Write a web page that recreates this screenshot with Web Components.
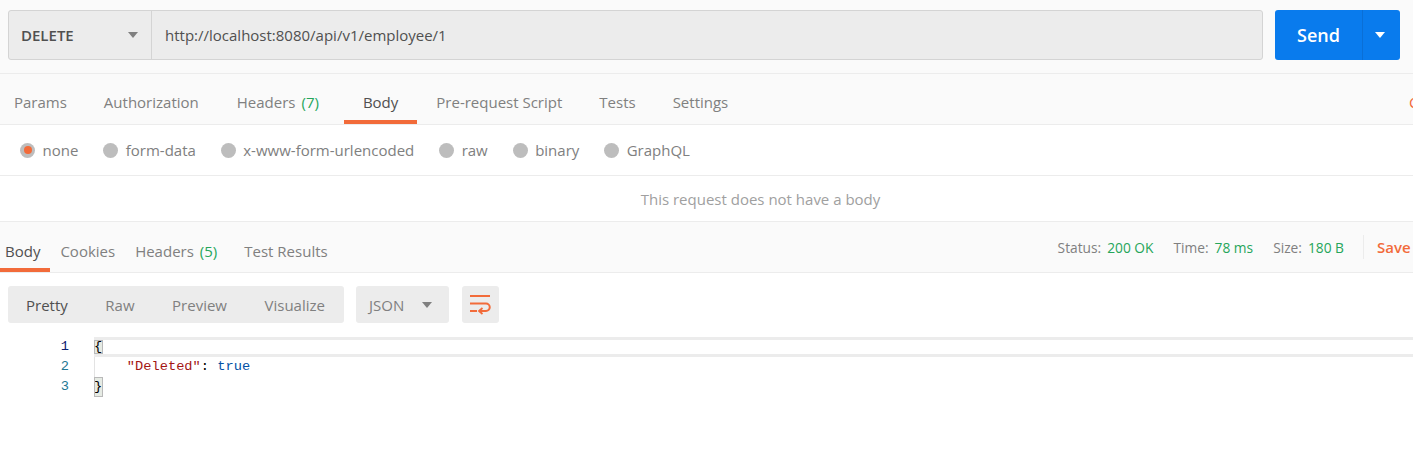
<!DOCTYPE html>
<html>
<head>
<meta charset="utf-8">
<title>Postman</title>
<style>
    html, body { margin: 0; padding: 0; background: #fff; overflow: hidden; }
    body { width: 1413px; height: 451px; font-family: "Open Sans", sans-serif; }
</style>
</head>
<body>
<pm-request-bar method="DELETE" url="http://localhost:8080/api/v1/employee/1"></pm-request-bar>
<pm-tabs style="--pad:-5px">
    <pm-tab style="margin-right:-1px">Params</pm-tab>
    <pm-tab>Authorization</pm-tab>
    <pm-tab style="margin-right:6px">Headers<b slot="count">(7)</b></pm-tab>
    <pm-tab active>Body</pm-tab>
    <pm-tab style="margin-right:-1px">Pre-request Script</pm-tab>
    <pm-tab style="margin-right:-1px">Tests</pm-tab>
    <pm-tab>Settings</pm-tab>
    <pm-clipped slot="right">Cookies</pm-clipped>
</pm-tabs>
<pm-body-types>
    <pm-radio checked>none</pm-radio>
    <pm-radio>form-data</pm-radio>
    <pm-radio>x-www-form-urlencoded</pm-radio>
    <pm-radio>raw</pm-radio>
    <pm-radio>binary</pm-radio>
    <pm-radio>GraphQL</pm-radio>
</pm-body-types>
<pm-empty-note>This request does not have a body</pm-empty-note>
<pm-response-head></pm-response-head>
<pm-response-toolbar></pm-response-toolbar>
<pm-code-view></pm-code-view>

<script>
const caret = (color, w = 10, h = 6) => `<svg width="${w}" height="${h}" viewBox="0 0 10 6"><path d="M0 0h10L5 6z" fill="${color}"/></svg>`

class PmRequestBar extends HTMLElement {
    constructor() {
        super()
        const shadow = this.attachShadow({ mode: 'open' })
        shadow.innerHTML = `
            <style>
                :host { display: flex; box-sizing: border-box; height: 74px; padding: 10px 13px 0 8px; background: #fafafa; border-bottom: 1px solid #ececec; font-family: "Open Sans", sans-serif; }
                .field { display: flex; flex: 1; height: 50px; box-sizing: border-box; background: #ececec; border: 1px solid #d4d4d4; border-radius: 3px; font-size: 15px; color: #505050; }
                .method { display: flex; align-items: center; justify-content: space-between; box-sizing: border-box; width: 143px; padding: 0 13px 0 12px; border-right: 1px solid #d4d4d4; font-weight: 600; font-size: 15px; }
                .url { display: flex; align-items: center; padding-left: 13px; }
                .send { display: flex; width: 125px; height: 50px; margin-left: 12px; background: #097bed; border-radius: 3px; color: #fff; font-size: 18px; font-weight: 600; }
                .send span { display: flex; align-items: center; justify-content: center; width: 87px; border-right: 1px solid #0a6fd6; }
                .send i { display: flex; align-items: center; justify-content: center; flex: 1; padding-right: 3px; }
            </style>
            <div class="field">
                <div class="method">${this.getAttribute('method')}${caret('#808080')}</div>
                <div class="url">${this.getAttribute('url')}</div>
            </div>
            <div class="send"><span>Send</span><i>${caret('#fff')}</i></div>
        `
    }
}

class PmTabs extends HTMLElement {
    constructor() {
        super()
        const shadow = this.attachShadow({ mode: 'open' })
        shadow.innerHTML = `
            <style>
                :host { display: flex; box-sizing: border-box; height: 51px; background: #fafafa; border-bottom: 1px solid #ececec; }
                .list { display: flex; margin-left: var(--pad); }
                .right { display: flex; margin-left: auto; }
            </style>
            <div class="list"><slot></slot></div>
            <div class="right"><slot name="right"></slot></div>
        `
    }
}

class PmTab extends HTMLElement {
    constructor() {
        super()
        const shadow = this.attachShadow({ mode: 'open' })
        shadow.innerHTML = `
            <style>
                :host { display: flex; align-items: center; box-sizing: border-box; height: 50px; padding: var(--tab-top, 9px) var(--tab-pad, 19px) 0; border-bottom: 4px solid transparent; font-family: "Open Sans", sans-serif; font-size: 15px; color: #808080; }
                :host([active]) { color: #505050; border-bottom-color: #f26b3a; }
                ::slotted(b) { font-weight: 400; color: #26a65b; margin-left: 6px; }
            </style>
            <slot></slot><slot name="count"></slot>
        `
    }
}

class PmClipped extends HTMLElement {
    constructor() {
        super()
        const shadow = this.attachShadow({ mode: 'open' })
        shadow.innerHTML = `
            <style>
                :host { display: flex; align-items: center; width: 4px; height: 50px; overflow: hidden; padding-top: 5px; box-sizing: border-box; font-family: "Open Sans", sans-serif; font-size: 15px; color: #f26b3a; }
            </style>
            <slot></slot>
        `
    }
}

class PmBodyTypes extends HTMLElement {
    constructor() {
        super()
        const shadow = this.attachShadow({ mode: 'open' })
        shadow.innerHTML = `
            <style>
                :host { display: flex; align-items: center; box-sizing: border-box; height: 51px; padding: 0 0 0 20px; gap: 24.9px; background: #fff; border-bottom: 1px solid #ececec; }
            </style>
            <slot></slot>
        `
    }
}

class PmRadio extends HTMLElement {
    constructor() {
        super()
        const shadow = this.attachShadow({ mode: 'open' })
        shadow.innerHTML = `
            <style>
                :host { display: flex; align-items: center; gap: 7.5px; font-family: "Open Sans", sans-serif; font-size: 15px; color: #808080; }
                .dot { display: flex; align-items: center; justify-content: center; width: 15px; height: 15px; border-radius: 50%; background: #bdbdbd; }
                :host([checked]) .dot::after { content: ""; width: 8px; height: 8px; border-radius: 50%; background: #f26b3a; }
            </style>
            <span class="dot"></span><slot></slot>
        `
    }
}

class PmEmptyNote extends HTMLElement {
    constructor() {
        super()
        const shadow = this.attachShadow({ mode: 'open' })
        shadow.innerHTML = `
            <style>
                :host { display: flex; align-items: center; justify-content: center; box-sizing: border-box; height: 46px; padding: 0 0 0 108px; background: #fff; border-bottom: 1px solid #ececec; font-family: "Open Sans", sans-serif; font-size: 15px; color: #a0a0a0; }
            </style>
            <slot></slot>
        `
    }
}

class PmResponseHead extends HTMLElement {
    constructor() {
        super()
        const shadow = this.attachShadow({ mode: 'open' })
        shadow.innerHTML = `
            <style>
                :host { display: flex; box-sizing: border-box; height: 51px; background: #fafafa; border-bottom: 1px solid #ececec; font-family: "Open Sans", sans-serif; }
                .tabs { display: flex; margin-left: -5px; --tab-pad: 10px; --tab-top: 11px; }
                .meta { display: flex; align-items: center; margin-left: auto; height: 50px; box-sizing: border-box; font-size: 13.75px; color: #808080; }
                .meta em { font-style: normal; color: #26a65b; margin: 0 20px 0 6px; }
                .meta em.last { margin-right: 19px; }
                .sep { width: 1px; height: 24px; background: #ececec; margin: 0 13px 0 0; }
                .save { display: block; width: 36px; font-size: 15px; font-weight: 600; color: #f26b3a; overflow: hidden; }
            </style>
            <div class="tabs">
                <pm-tab active>Body</pm-tab>
                <pm-tab>Cookies</pm-tab>
                <pm-tab>Headers<b slot="count">(5)</b></pm-tab>
                <pm-tab style="margin-left:7px">Test Results</pm-tab>
            </div>
            <div class="meta">
                <span>Status:</span><em>200 OK</em>
                <span>Time:</span><em>78 ms</em>
                <span>Size:</span><em class="last">180 B</em>
                <span class="sep"></span><span class="save">Save</span>
            </div>
        `
    }
}

class PmResponseToolbar extends HTMLElement {
    constructor() {
        super()
        const shadow = this.attachShadow({ mode: 'open' })
        shadow.innerHTML = `
            <style>
                :host { display: flex; box-sizing: border-box; height: 64px; padding: 13px 0 0 8px; background: #fff; font-family: "Open Sans", sans-serif; font-size: 15px; color: #808080; }
                .group { display: flex; align-items: center; height: 37px; background: #ececec; border-radius: 3px; }
                .modes { width: 336px; box-sizing: border-box; padding: 0 19px 0 18px; justify-content: space-between; }
                .modes .on { color: #505050; }
                .lang { width: 93px; margin-left: 12px; box-sizing: border-box; padding: 0 17px 0 13px; justify-content: space-between; }
                .wrap { width: 37px; margin-left: 13px; justify-content: center; }
            </style>
            <div class="group modes"><span class="on">Pretty</span><span>Raw</span><span>Preview</span><span>Visualize</span></div>
            <div class="group lang"><span>JSON</span>${caret('#808080')}</div>
            <div class="group wrap">
                <svg width="21" height="21" viewBox="0 0 21 21" fill="none" stroke="#f26b3a" stroke-width="2">
                    <path d="M0 2h20"/><path d="M0 9.500h16a3.750 3.750 0 0 1 0 7.500H9.500"/><path d="M0 17h7"/>
                    <path d="M12.500 14l-3.500 3 3.500 3" stroke-width="1.800"/>
                </svg>
            </div>
        `
    }
}

class PmCodeView extends HTMLElement {
    constructor() {
        super()
        const shadow = this.attachShadow({ mode: 'open' })
        shadow.innerHTML = `
            <style>
                :host { display: grid; grid-template-columns: 94px 1fr; font-family: "Liberation Mono", monospace; font-size: 13.7px; line-height: 20px; background: #fff; }
                .nums { text-align: right; padding-right: 25px; color: #237893; box-sizing: border-box; }
                .nums .cur { color: #0b216f; }
                .lines { position: relative; }
                .line { height: 20px; white-space: pre; color: #000; }
                .cur-line { box-sizing: border-box; height: 20px; border-top: 3px solid #ececec; border-bottom: 3px solid #ececec; line-height: 14px; }
                .brace { display: inline-block; box-sizing: border-box; width: 9px; background: #e6ebe4; outline: 1px solid #b9b9b9; outline-offset: -1px; }
                .str { color: #a31515; }
                .kw { color: #0451a5; }
                .guide { position: absolute; left: 0; top: 20px; bottom: 20px; width: 1px; background: #e3e3e3; }
            </style>
            <div class="nums"><div class="cur">1</div><div>2</div><div>3</div></div>
            <div class="lines">
                <div class="line cur-line"><span class="brace">{</span></div>
                <div class="line">    <span class="str">"Deleted"</span>: <span class="kw">true</span></div>
                <div class="line"><span class="brace">}</span></div>
                <div class="guide"></div>
            </div>
        `
    }
}

customElements.define('pm-tab', PmTab)
customElements.define('pm-clipped', PmClipped)
customElements.define('pm-request-bar', PmRequestBar)
customElements.define('pm-tabs', PmTabs)
customElements.define('pm-body-types', PmBodyTypes)
customElements.define('pm-radio', PmRadio)
customElements.define('pm-empty-note', PmEmptyNote)
customElements.define('pm-response-head', PmResponseHead)
customElements.define('pm-response-toolbar', PmResponseToolbar)
customElements.define('pm-code-view', PmCodeView)
</script>
</body>
</html>
